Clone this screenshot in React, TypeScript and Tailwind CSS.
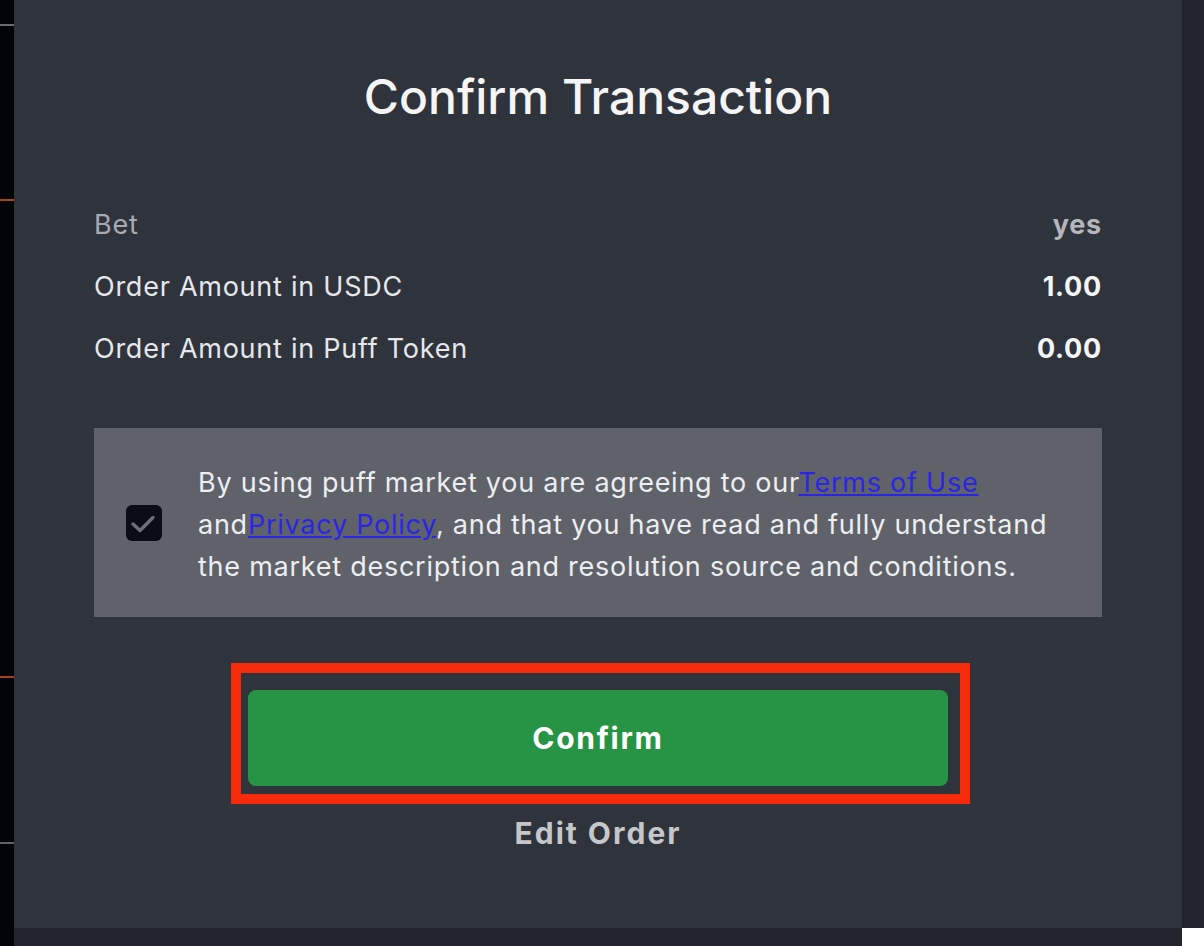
export default function App() {
  const rows = [
    { label: "Bet", value: "yes", muted: true },
    { label: "Order Amount in USDC", value: "1.00", muted: false },
    { label: "Order Amount in Puff Token", value: "0.00", muted: false },
  ];

  return (
    <main
      className="flex h-[946px] w-[1204px] overflow-hidden bg-[#22252d]"
      style={{ fontFamily: "Inter, 'Noto Sans', sans-serif" }}
    >
      {/* LEFT STRIP (page behind the modal) */}
      <div className="flex h-full w-[14px] flex-col bg-[#030407]">
        <div className="mt-[24px] h-[2px] bg-[#6a6a6a]" />
        <div className="mt-[173px] h-[2px] bg-[#a4431c]" />
        <div className="mt-[475px] h-[2px] bg-[#a4431c]" />
        <div className="mt-[164px] h-[2px] bg-[#626262]" />
      </div>

      <div className="flex w-[1168px] flex-col">
        {/* MODAL */}
        <section className="flex h-[928px] flex-col bg-[#2f333c] px-[80px] pt-[68px]">
          <h1 className="text-center text-[48px] font-medium leading-[58px] text-[#f5f5f6]">
            Confirm Transaction
          </h1>

          <div className="mt-[80px] flex flex-col gap-[24px]">
            {rows.map((row) => (
              <div
                key={row.label}
                className="flex items-center justify-between text-[27px] leading-[38px] tracking-[0.75px]"
              >
                <span className={row.muted ? "text-[#a8abb1]" : "text-[#e6e7ea]"}>{row.label}</span>
                <span className={row.muted ? "font-bold text-[#b4b6bb]" : "font-bold text-[#f3f4f6]"}>
                  {row.value}
                </span>
              </div>
            ))}
          </div>

          {/* TERMS BOX */}
          <div className="mt-[60px] flex h-[189px] items-center gap-[36px] bg-[#5f6269] pl-[32px] pr-[32px]">
            <div className="flex h-[36px] w-[36px] shrink-0 items-center justify-center rounded-[6px] bg-[#0a0d15]">
              <svg width="36" height="36" viewBox="0 0 36 36" fill="none">
                <path
                  d="M7 19 L14 25.5 L27 12.5"
                  stroke="#6c6f78"
                  strokeWidth="3.4"
                  strokeLinecap="round"
                  strokeLinejoin="round"
                />
              </svg>
            </div>
            <p className="pt-[4px] text-[27px] leading-[42px] tracking-[0.75px] text-[#eceef1]">
              By using puff market you are agreeing to our
              <a href="#" className="text-[#2b25e6] underline">
                Terms of Use
              </a>{" "}
              and
              <a href="#" className="text-[#2b25e6] underline">
                Privacy Policy
              </a>
              , and that you have read and fully understand the market description and resolution source and
              conditions.
            </p>
          </div>

          {/* ACTIONS */}
          <div className="mt-[73px] flex flex-col items-center">
            <div className="relative">
              <button className="h-[96px] w-[700px] rounded-[8px] bg-[#269444] text-[30px] font-bold tracking-[1.7px] text-white">
                Confirm
              </button>
              <div className="pointer-events-none absolute left-[-17px] top-[-27px] h-[141px] w-[739px] border-[10px] border-[#f52a0a]" />
            </div>
            <button className="mt-[29px] text-[30px] font-bold leading-[36px] tracking-[2px] text-[#c6c7cb]">
              Edit Order
            </button>
          </div>
        </section>
      </div>

      {/* RIGHT STRIP */}
      <div className="flex h-full w-[22px] flex-col">
        <div className="h-[928px] bg-[#22252d]" />
        <div className="flex-1 bg-white" />
      </div>
    </main>
  );
}
